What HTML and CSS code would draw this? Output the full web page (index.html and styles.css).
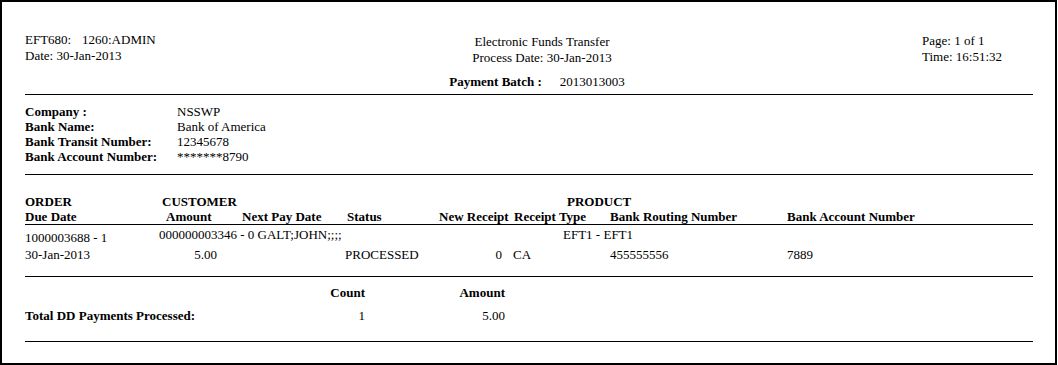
FILE: index.html
```html
<!DOCTYPE html>
<html>
<head>
<meta charset="utf-8">
<title>EFT680 - Electronic Funds Transfer</title>
<link rel="stylesheet" href="styles.css">
</head>
<body>
<div class="page">
  <div class="report">
    <div class="head">
      <div class="head-left">
        <div class="line"><span class="code">EFT680:</span><span>1260:ADMIN</span></div>
        <div class="line">Date: 30-Jan-2013</div>
      </div>
      <div class="head-center">
        <div class="line">Electronic Funds Transfer</div>
        <div class="line">Process Date: 30-Jan-2013</div>
      </div>
      <div class="head-right">
        <div class="line">Page: 1 of 1</div>
        <div class="line">Time: 16:51:32</div>
      </div>
      <div class="batch">
        <span class="b">Payment Batch :</span>
        <span>2013013003</span>
      </div>
    </div>
    <hr class="rule rule-1">
    <div class="company">
      <div class="b">Company :</div><div>NSSWP</div>
      <div class="b">Bank Name:</div><div>Bank of America</div>
      <div class="b">Bank Transit Number:</div><div>12345678</div>
      <div class="b">Bank Account Number:</div><div>*******8790</div>
    </div>
    <hr class="rule rule-2">
    <div class="cols cols-head b">
      <div class="c1">ORDER</div>
      <div class="c2 pad-cust">CUSTOMER</div>
      <div class="c6 pad-prod">PRODUCT</div>
      <div class="c1">Due Date</div>
      <div class="c2 pad-amt">Amount</div>
      <div class="c3">Next Pay Date</div>
      <div class="c4 pad-status">Status</div>
      <div class="c5 right pad-newr">New Receipt</div>
      <div class="c6 pad-rtype">Receipt Type</div>
      <div class="c7">Bank Routing Number</div>
      <div class="c8">Bank Account Number</div>
    </div>
    <hr class="rule rule-3">
    <div class="cols cols-data row-1">
      <div class="c1 order-no">1000003688 - 1</div>
      <div class="cust">000000003346 - 0 GALT;JOHN;;;;</div>
      <div class="c6 pad-eft">EFT1 - EFT1</div>
    </div>
    <div class="cols cols-data row-2">
      <div class="c1">30-Jan-2013</div>
      <div class="c2 right pad-amtval">5.00</div>
      <div class="c4">PROCESSED</div>
      <div class="c5 right pad-zero">0</div>
      <div class="c6">CA</div>
      <div class="c7">455555556</div>
      <div class="c8">7889</div>
    </div>
    <hr class="rule rule-4">
    <div class="totals">
      <div></div>
      <div class="b right">Count</div>
      <div class="b right">Amount</div>
      <div class="b total-label">Total DD Payments Processed:</div>
      <div class="right total-val">1</div>
      <div class="right total-val">5.00</div>
    </div>
    <hr class="rule rule-5">
  </div>
</div>
</body>
</html>
```

FILE: styles.css
```css
html, body {
  margin: 0;
  padding: 0;
  background: #fff;
}

body {
  font-family: "Liberation Serif", "Times New Roman", serif;
  font-size: 13px;
  color: #000;
}

.page {
  width: 1057px;
  height: 365px;
  box-sizing: border-box;
  border: 2px solid #000;
  padding: 30px 0 0 23px;
}

.report {
  width: 1008px;
}

.b {
  font-weight: bold;
}

.right {
  text-align: right;
}

/* header */
.head {
  display: grid;
  grid-template-columns: 380px 274px 1fr;
  line-height: 16px;
}

.head-left .code {
  display: inline-block;
  width: 57px;
}

.head-center {
  text-align: center;
  padding-top: 2px;
}

.head-right {
  justify-self: end;
  width: 111px;
  padding-top: 1px;
}

.batch {
  grid-column: 2;
  display: flex;
  justify-content: center;
  gap: 18px;
  margin-top: 8px;
  padding-right: 10px;
}

.rule {
  border: 0;
  border-top: 1px solid #000;
  height: 0;
  margin: 0;
}

.rule-1 { margin-top: 4px; }
.rule-2 { margin-top: 10px; }
.rule-3 { margin-top: 0; }
.rule-4 { margin-top: 14px; }
.rule-5 { margin-top: 18px; }

/* company block */
.company {
  display: grid;
  grid-template-columns: 152px 1fr;
  line-height: 15px;
  margin-top: 9px;
}

/* detail columns */
.cols {
  display: grid;
  grid-template-columns: 134px 83px 103px 94px 74px 97px 177px 246px;
  line-height: 15px;
  white-space: nowrap;
}

.cols-head {
  margin-top: 19px;
}

.c1 { grid-column: 1; }
.c2 { grid-column: 2; }
.c3 { grid-column: 3; }
.c4 { grid-column: 4; }
.c5 { grid-column: 5; }
.c6 { grid-column: 6; }
.c7 { grid-column: 7; }
.c8 { grid-column: 8; }

.pad-cust { padding-left: 3px; }
.pad-prod { padding-left: 54px; }
.pad-amt { padding-left: 7px; }
.pad-status { padding-left: 2px; }
.pad-newr { padding-right: 7px; }
.pad-rtype { padding-left: 1px; }
.pad-eft { padding-left: 50px; }
.pad-amtval { padding-right: 25px; }
.pad-zero { padding-right: 11px; }

.row-1 {
  margin-top: 2px;
}

.row-1 .order-no {
  padding-top: 3px;
}

.row-1 .cust {
  grid-column: 2 / 6;
}

.row-2 {
  margin-top: 2px;
}

/* totals */
.totals {
  display: grid;
  grid-template-columns: 280px 60px 140px;
  line-height: 15px;
  row-gap: 8px;
  margin-top: 8px;
}
```
